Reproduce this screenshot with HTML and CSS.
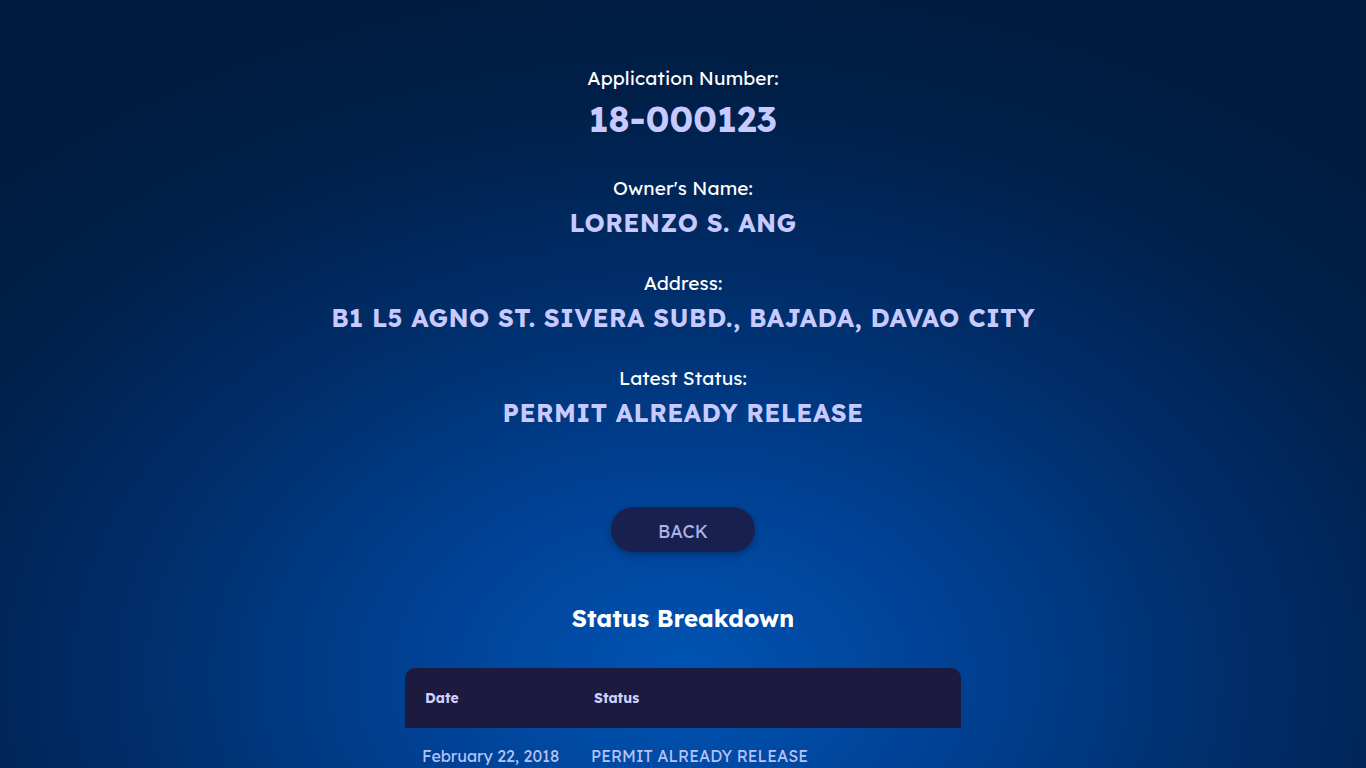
FILE: index.html
```html
<!DOCTYPE html>
<html lang="en">
<head>
<meta charset="utf-8">
<title>Application Status</title>
<link rel="stylesheet" href="styles.css">
</head>
<body>
<main class="page">
  <section class="details">
    <div class="field">
      <div class="label">Application Number:</div>
      <div class="value value-lg">18-000123</div>
    </div>
    <div class="field">
      <div class="label">Owner's Name:</div>
      <div class="value">LORENZO S. ANG</div>
    </div>
    <div class="field">
      <div class="label">Address:</div>
      <div class="value">B1 L5 AGNO ST. SIVERA SUBD., BAJADA, DAVAO CITY</div>
    </div>
    <div class="field">
      <div class="label">Latest Status:</div>
      <div class="value">PERMIT ALREADY RELEASE</div>
    </div>
  </section>
  <button class="back">BACK</button>
  <h2 class="title">Status Breakdown</h2>
  <table class="breakdown">
    <thead>
      <tr><th class="col-date">Date</th><th>Status</th></tr>
    </thead>
    <tbody>
      <tr><td class="col-date">February 22, 2018</td><td>PERMIT ALREADY RELEASE</td></tr>
    </tbody>
  </table>
</main>
</body>
</html>
```
FILE: styles.css
```css
html, body {
  margin: 0;
  padding: 0;
  height: 100%;
}
body {
  font-family: "Lexend", "Inter", "Noto Sans", sans-serif;
  background: radial-gradient(ellipse 75% 95% at 50% 88%, #0054b4 0%, #004296 25%, #002d68 55%, #001f48 80%, #001b3e 100%);
  color: #fff;
  overflow: hidden;
}
.page {
  display: flex;
  flex-direction: column;
  align-items: center;
  padding-top: 66px;
}
.details {
  display: flex;
  flex-direction: column;
  align-items: center;
  gap: 33px;
}
.field {
  display: flex;
  flex-direction: column;
  align-items: center;
  gap: 7px;
}
.label {
  font-size: 19px;
  line-height: 24px;
  letter-spacing: 0.1px;
  color: #fff;
}
.value {
  font-size: 25px;
  line-height: 31px;
  font-weight: 700;
  color: #c8caff;
  letter-spacing: 0.4px;
}
.value-lg {
  font-size: 35px;
  line-height: 44px;
  letter-spacing: 0.2px;
  margin-bottom: 2px;
}
.back {
  margin-top: 79px;
  width: 144px;
  height: 45px;
  padding: 4px 0 0;
  border: none;
  border-radius: 23px;
  background: #17204f;
  color: #aab4e6;
  font-family: inherit;
  font-size: 18px;
  box-shadow: 0 3px 8px rgba(0, 0, 0, 0.3);
}
.title {
  margin: 51px 0 0;
  font-size: 24px;
  line-height: 30px;
  font-weight: 700;
  color: #fff;
}
.breakdown {
  margin-top: 35px;
  width: 556px;
  border-collapse: separate;
  border-spacing: 0;
  text-align: left;
}
.breakdown thead th {
  background: #1c1a3e;
  height: 60px;
  padding: 0;
  font-size: 14px;
  font-weight: 700;
  color: #cfd0ff;
}
.breakdown thead th.col-date {
  padding-left: 20px;
  width: 169px;
  border-top-left-radius: 10px;
}
.breakdown thead th:last-child {
  border-top-right-radius: 10px;
}
.breakdown tbody td {
  padding-top: 18px;
  font-size: 16px;
  line-height: 20px;
  color: #b7c2f3;
}
.breakdown tbody td.col-date {
  padding-left: 17px;
}
.breakdown tbody td:last-child {
  padding-left: 0;
  position: relative;
  left: -3px;
}
```
